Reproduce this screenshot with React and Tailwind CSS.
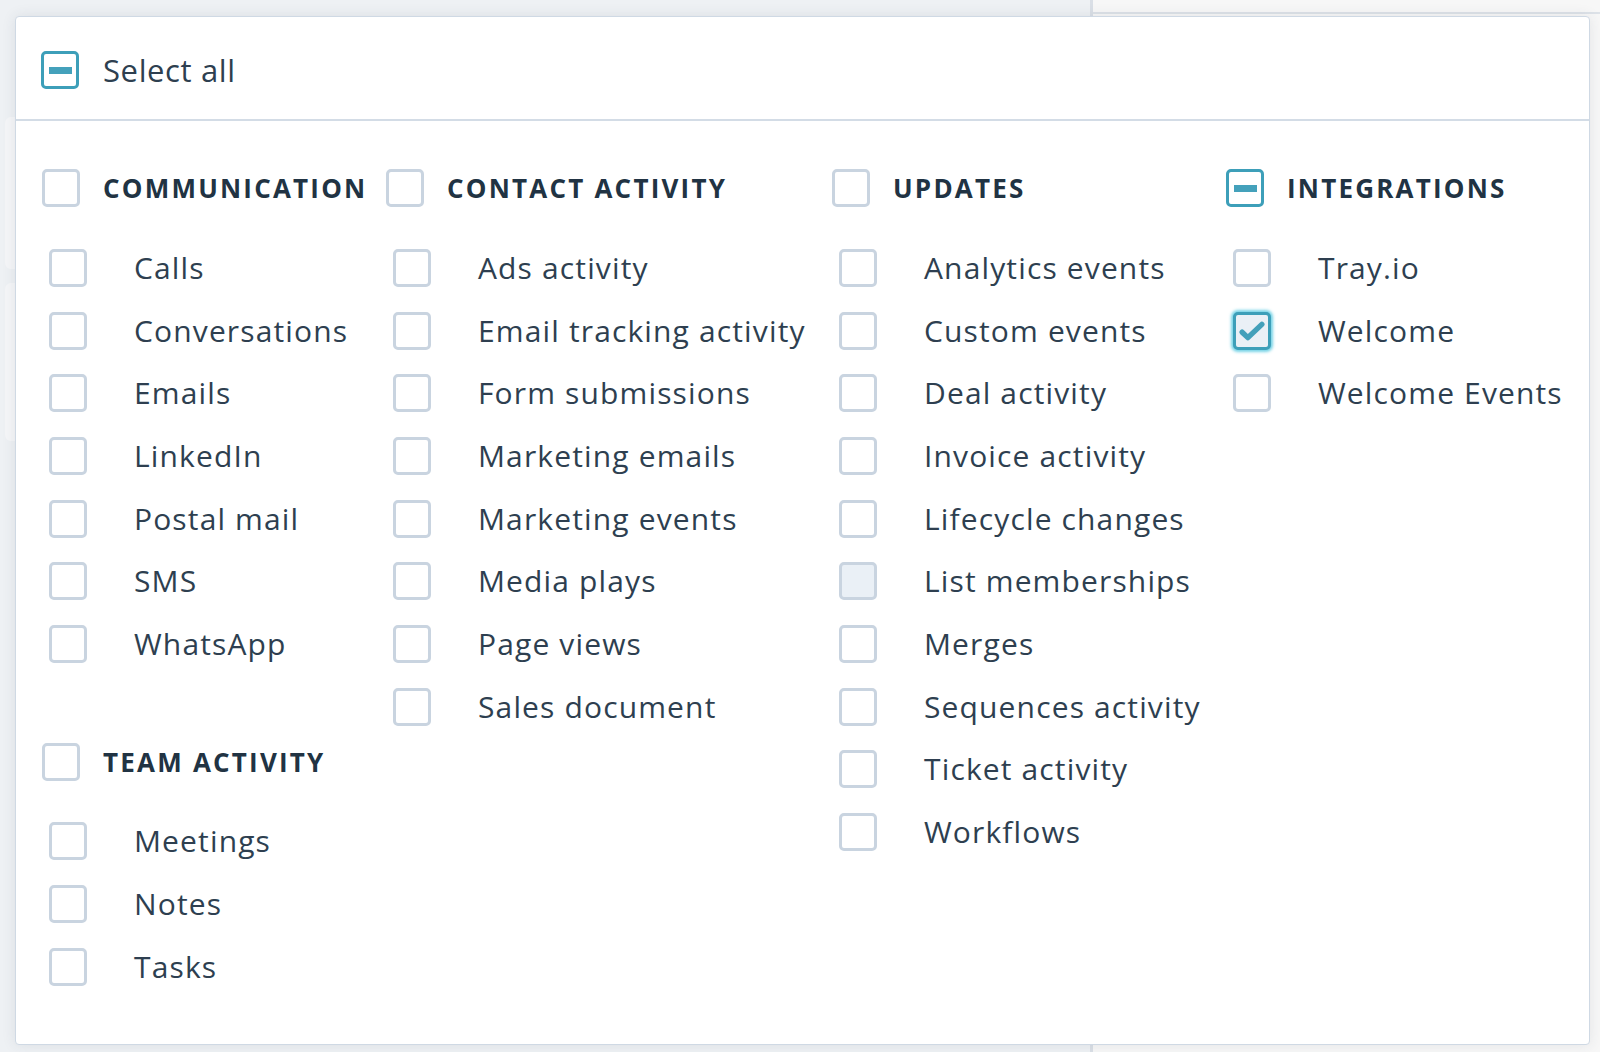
import React from "react";

const FONT = { fontFamily: '"Open Sans", "Noto Sans", "Liberation Sans", sans-serif' };

function Box({ state = "empty" }) {
  if (state === "indeterminate") {
    return (
      <div className="w-[38px] h-[38px] shrink-0 rounded-[5px] border-[3px] border-[#3d9fb9] bg-white flex items-center justify-center">
        <div className="w-[23px] h-[7px] bg-[#44a1bb]" />
      </div>
    );
  }
  if (state === "checked") {
    return (
      <div className="w-[38px] h-[38px] shrink-0 rounded-[5px] border-[3px] border-[#3d9fb9] bg-[#eaf0f6] flex items-center justify-center shadow-[0_0_3px_2px_rgba(74,196,222,0.75)]">
        <svg width="32" height="32" viewBox="0 0 24 24" fill="none">
          <path d="M4.6 12.9l4.3 4.1L19.4 7" stroke="#43a0ba" strokeWidth="4" strokeLinecap="round" strokeLinejoin="round" />
        </svg>
      </div>
    );
  }
  if (state === "hover") {
    return <div className="w-[38px] h-[38px] shrink-0 rounded-[5px] border-[3px] border-[#c9d4e0] bg-[#eaf0f6]" />;
  }
  return <div className="w-[38px] h-[38px] shrink-0 rounded-[5px] border-[3px] border-[#c9d4e0] bg-white" />;
}

function Group({ title, state, items, className = "" }) {
  return (
    <div className={"flex flex-col " + className}>
      <div className="h-[62.67px] mb-[17px] flex items-center">
        <Box state={state} />
        <span className="ml-[23px] text-[26px] font-bold tracking-[0.085em] text-[#213343] whitespace-nowrap leading-none">
          {title}
        </span>
      </div>
      {items.map((it) => {
        const label = typeof it === "string" ? it : it.label;
        const st = typeof it === "string" ? "empty" : it.state;
        return (
          <div key={label} className="h-[62.67px] flex items-center pl-[7px]">
            <Box state={st} />
            <span className="ml-[47px] text-[30px] tracking-[0.038em] text-[#2e3f50] whitespace-nowrap leading-none">
              {label}
            </span>
          </div>
        );
      })}
    </div>
  );
}

export default function App() {
  return (
    <div className="relative w-[1600px] h-[1052px] overflow-hidden bg-[#f3f5f8]" style={FONT}>
      {/* background page behind the popover */}
      <div className="flex h-full">
        <div className="w-[1090px] h-full bg-[#eef1f4] flex flex-col pt-[117px] pl-[5px] gap-[14px]">
          <div className="w-[20px] h-[152px] rounded-l-[6px] bg-[#f5f6f8]" />
          <div className="w-[20px] h-[158px] rounded-l-[6px] bg-[#f5f6f8]" />
        </div>
        <div className="w-[3px] h-full bg-[#dadfe6]" />
        <div className="flex-1 h-full bg-[#f7f7f7] flex flex-col">
          <div className="h-[14px] border-b-2 border-[#dde2e8]" />
        </div>
      </div>

      {/* popover panel */}
      <div className="absolute left-[15px] top-[16px] w-[1575px] bg-white border border-[#cfd9e4] rounded-[4px] shadow-[0_0_14px_rgba(45,62,80,0.10)]">
        <div className="h-[104px] border-b-2 border-[#d3dce6] flex items-center pl-[25px] pt-[4px]">
          <Box state="indeterminate" />
          <span className="ml-[24px] text-[31px] tracking-[0.02em] text-[#2e3f50] leading-none">Select all</span>
        </div>
        <div className="flex pl-[26px] pt-[36px] pb-[46px]">
          <div className="w-[344px] shrink-0 flex flex-col">
            <Group
              title="COMMUNICATION"
              items={["Calls", "Conversations", "Emails", "LinkedIn", "Postal mail", "SMS", "WhatsApp"]}
            />
            <Group title="TEAM ACTIVITY" className="mt-[55px]" items={["Meetings", "Notes", "Tasks"]} />
          </div>
          <div className="w-[446px] shrink-0">
            <Group
              title="CONTACT ACTIVITY"
              items={[
                "Ads activity",
                "Email tracking activity",
                "Form submissions",
                "Marketing emails",
                "Marketing events",
                "Media plays",
                "Page views",
                "Sales document",
              ]}
            />
          </div>
          <div className="w-[394px] shrink-0">
            <Group
              title="UPDATES"
              items={[
                "Analytics events",
                "Custom events",
                "Deal activity",
                "Invoice activity",
                "Lifecycle changes",
                { label: "List memberships", state: "hover" },
                "Merges",
                "Sequences activity",
                "Ticket activity",
                "Workflows",
              ]}
            />
          </div>
          <div className="flex-1">
            <Group
              title="INTEGRATIONS"
              state="indeterminate"
              items={["Tray.io", { label: "Welcome", state: "checked" }, "Welcome Events"]}
            />
          </div>
        </div>
      </div>
    </div>
  );
}
